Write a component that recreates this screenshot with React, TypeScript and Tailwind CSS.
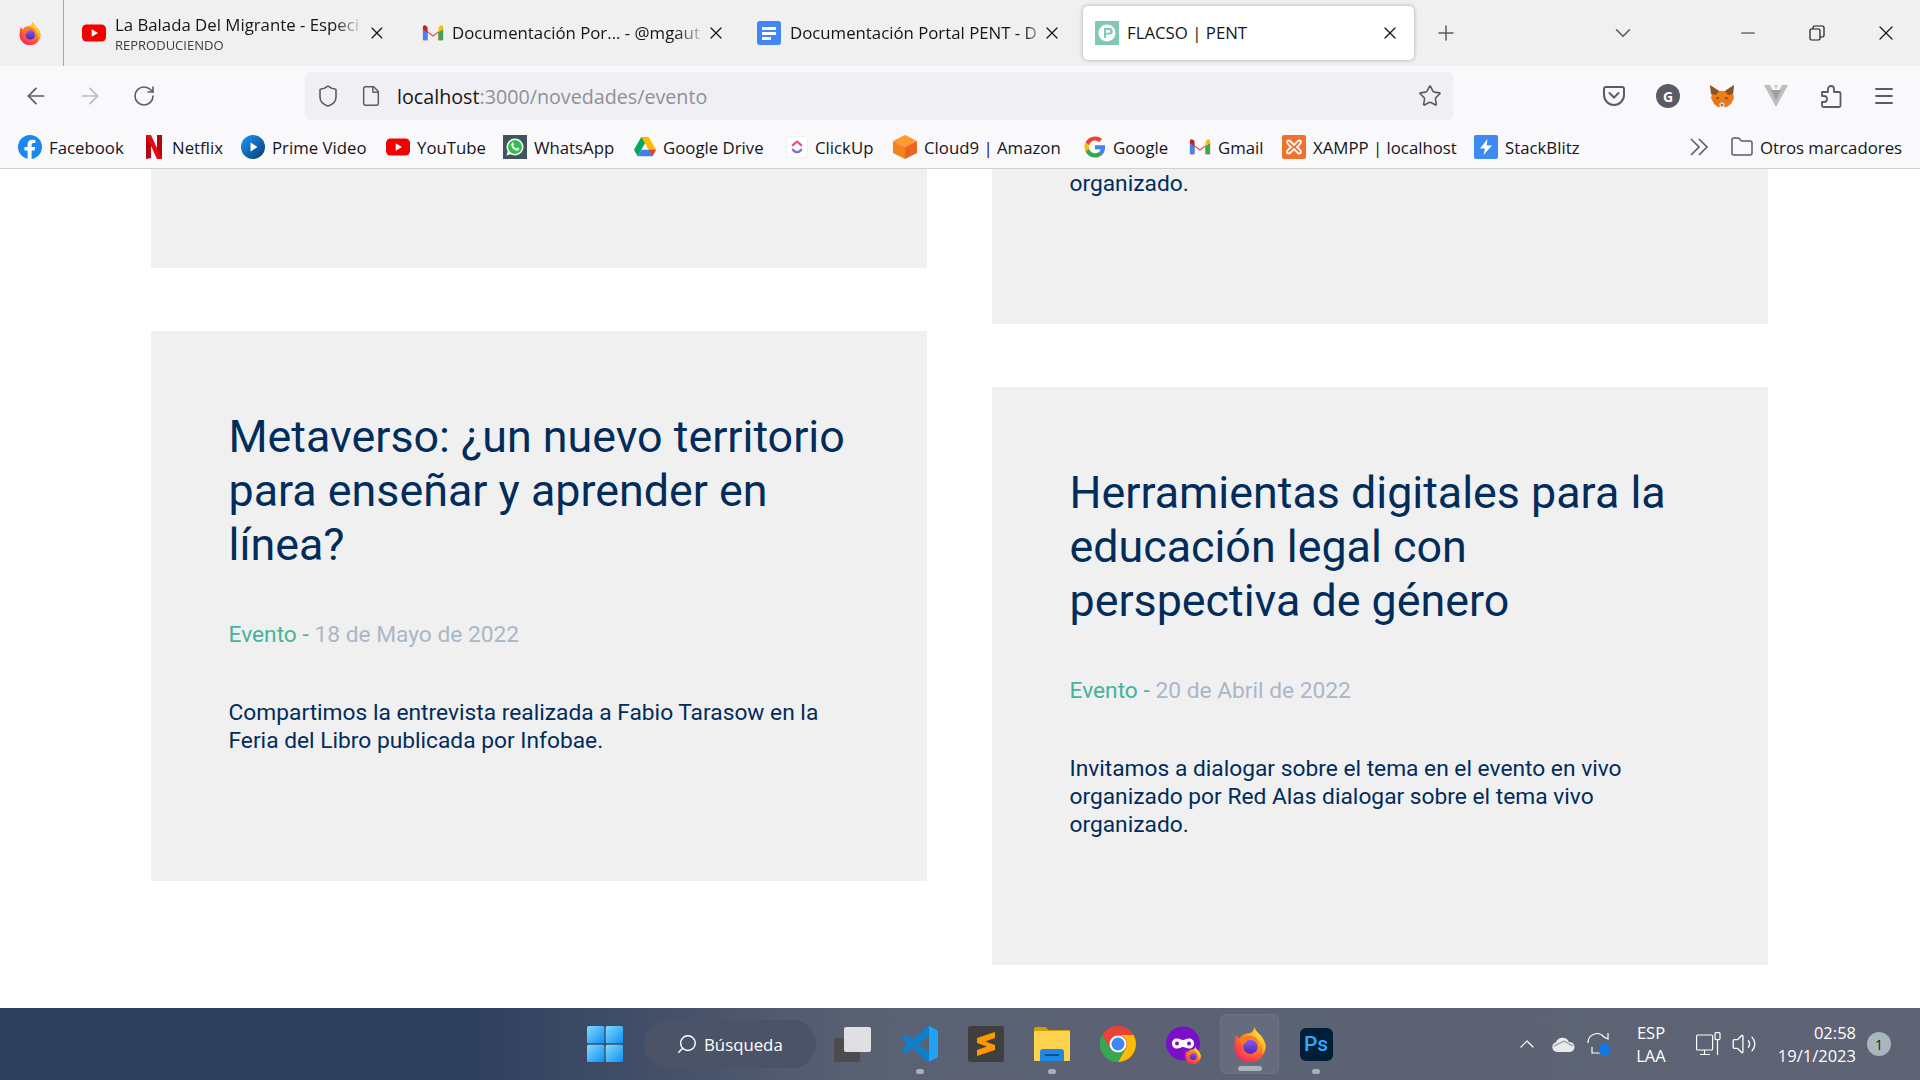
import React from "react"
import { ArrowLeft, ArrowRight, RotateCw, Shield, File, Star, Plus, ChevronDown, Minus, X, Menu, Folder, ChevronUp, Search, Volume2 } from "lucide-react"

const Firefox = ({ size = 24 }: { size?: number }) => (
	<svg width={size} height={size} viewBox="0 0 40 40">
		<defs>
			<radialGradient id="ffbase" cx="0.7" cy="0.2" r="1">
				<stop offset="0" stopColor="#ffd02e" />
				<stop offset="0.4" stopColor="#ff8a1f" />
				<stop offset="0.75" stopColor="#ff3b4e" />
				<stop offset="1" stopColor="#e31587" />
			</radialGradient>
			<linearGradient id="ffflame" x1="0.5" y1="0" x2="0.5" y2="1">
				<stop offset="0" stopColor="#ffe23a" />
				<stop offset="1" stopColor="#ffa51f" />
			</linearGradient>
			<linearGradient id="ffcore" x1="0.5" y1="0" x2="0.5" y2="1">
				<stop offset="0" stopColor="#8a5cf0" />
				<stop offset="1" stopColor="#4e25b0" />
			</linearGradient>
		</defs>
		<path d="M3 19C3 15 4 12 5 10c1 2 2 3 3 4 3-5 8-6 12-6 2-1 4-3 5-7 1 5 5 7 8 11 3 4 4.500 8 4.500 11a17.500 17.500 0 0 1-35 0c0-1 .2-3 .5-4z" fill="url(#ffbase)" />
		<path d="M25 1c1 5 5 7 8 11 3 4 4.500 8 4.500 11 -.5 4-2.500 7-4.500 9 2-6 0-14-6-18-1-4-1-8-2-13z" fill="url(#ffflame)" />
		<circle cx="20.500" cy="23" r="8" fill="url(#ffcore)" />
		<path d="M6 17c4-5 10-7 16-6 5 1 8 5 8 10-2-4-5-6-9-6-3 0-5 1-6 4l-3 1c-1-2-3-3-6-3z" fill="#ff7a1f" />
	</svg>
)

const YoutubeIcon = () => (
	<svg width="24" height="24" viewBox="0 0 24 24" className="shrink-0">
		<rect x="0" y="3.500" width="24" height="17" rx="4.500" fill="#f40000" />
		<path d="M9.700 8.200v7.600l6.300-3.800z" fill="#fff" />
	</svg>
)

const GmailIcon = () => (
	<svg width="22" height="24" viewBox="0 0 24 24" className="shrink-0">
		<path d="M1 6.500 12 14.500 23 6.500V20h-5V11.500l-6 4.500-6-4.500V20H1z" fill="#ea4335" />
		<path d="M1 8v10.500A1.500 1.500 0 0 0 2.500 20H6v-8.500z" fill="#4285f4" />
		<path d="M23 8v10.500a1.500 1.500 0 0 1-1.500 1.500H18v-8.500z" fill="#34a853" />
		<path d="M18 6.500v5L23 8V5.500c0-1.800-2-2.600-3.200-1.500z" fill="#fbbc04" />
		<path d="M1 8V5.500C1 3.700 3 2.900 4.200 4L6 5.500v6z" fill="#c5221f" />
	</svg>
)

const DocsIcon = () => (
	<svg width="24" height="24" viewBox="0 0 24 24" className="shrink-0">
		<rect width="24" height="24" rx="3" fill="#4285f4" />
		<path d="M5 6h14v3H5zM5 11h14v3H5zM5 16h9v3H5z" fill="#fff" />
	</svg>
)

const PentIcon = () => (
	<svg width="24" height="24" viewBox="0 0 24 24" className="shrink-0">
		<rect width="24" height="24" fill="#7ec8b6" />
		<circle cx="12" cy="12" r="8.500" fill="#fff" />
		<path d="M9 7h5.500a3 3 0 0 1 0 6.500H11V17H9zM11 9v2.700h3a1.300 1.300 0 0 0 0-2.700z" fill="#7ec8b6" />
	</svg>
)

const FacebookIcon = () => (
	<svg width="24" height="24" viewBox="0 0 24 24" className="shrink-0">
		<circle cx="12" cy="12" r="12" fill="#1b87f3" />
		<path d="M16.600 15.400 17.200 12h-3.600V9.800c0-1 .5-1.800 2-1.800h1.700V5c-.9-.2-2-.3-2.900-.3-3 0-4.800 1.700-4.800 4.800V12H6.500v3.400h3.100V24h4v-8.600z" fill="#fff" />
	</svg>
)

const NetflixIcon = () => (
	<svg width="19" height="24" viewBox="4 0 19 24" className="shrink-0">
		<path d="M4 0h5v23l-5 1z" fill="#b1060f" />
		<path d="M15 0h5v24l-5-1z" fill="#b1060f" />
		<path d="M4 0h5l11 24h-5z" fill="#e50914" />
	</svg>
)

const PrimeIcon = () => (
	<svg width="24" height="24" viewBox="0 0 24 24" className="shrink-0">
		<defs>
			<linearGradient id="prm" x1="0" y1="0" x2="1" y2="1">
				<stop offset="0" stopColor="#1a98ff" />
				<stop offset="1" stopColor="#0a3a6e" />
			</linearGradient>
		</defs>
		<circle cx="12" cy="12" r="12" fill="url(#prm)" />
		<path d="M9.500 7.500v9l7-4.500z" fill="#fff" />
	</svg>
)

const WhatsappIcon = () => (
	<svg width="24" height="24" viewBox="0 0 24 24" className="shrink-0">
		<rect width="24" height="24" fill="#43535c" />
		<circle cx="12" cy="12" r="8.500" fill="#fff" />
		<path d="M3.500 20.500 5 15l4 4z" fill="#fff" />
		<circle cx="12" cy="12" r="7" fill="#30c04f" />
		<path d="M9.300 7.800c-.9.800-1.300 2-.7 3.500.8 2 2.300 3.500 4.300 4.200 1.400.5 2.500 0 3.100-.9.300-.6.300-1 .2-1.200l-2-1-.9 1c-1.400-.5-2.500-1.600-3.100-3l.8-.9-.9-2.100c-.2-.1-.5-.1-.8.400z" fill="#fff" />
	</svg>
)

const DriveIcon = () => (
	<svg width="22" height="22" viewBox="0 0 24 22" className="shrink-0">
		<path d="M8 0h8l8 14h-8z" fill="#ffba00" />
		<path d="M8 0 0 14l4 7 8-14z" fill="#00a85d" />
		<path d="M4 21h16l4-7H8z" fill="#3f7fee" />
		<path d="M16 14h8l-4 7z" fill="#e8412f" />
	</svg>
)

const ClickupIcon = () => (
	<svg width="22" height="24" viewBox="0 0 24 24" className="shrink-0">
		<rect x="0.500" y="0.500" width="23" height="23" rx="3" fill="#fff" stroke="#eeeeee" />
		<path d="M7.500 10 12 6l4.500 4" stroke="#f04a8a" strokeWidth="2.500" fill="none" strokeLinecap="round" strokeLinejoin="round" />
		<path d="M7.500 15c2.500 3.400 6.500 3.400 9 0" stroke="#7b68ee" strokeWidth="2.500" fill="none" strokeLinecap="round" />
	</svg>
)

const CloudNineIcon = () => (
	<svg width="24" height="24" viewBox="0 0 24 24" className="shrink-0">
		<path d="M12 0 24 6 12 12 0 6z" fill="#ff9a2e" />
		<path d="M0 6 12 12V24L0 18z" fill="#f58220" />
		<path d="M24 6 12 12V24L24 18z" fill="#e8651f" />
	</svg>
)

const GoogleIcon = () => (
	<svg width="22" height="22" viewBox="0 0 24 24" className="shrink-0">
		<path d="M23 12.300c0-.8-.1-1.600-.2-2.300H12v4.400h6.200a5.300 5.300 0 0 1-2.300 3.500v2.900h3.700c2.100-2 3.400-4.900 3.400-8.500z" fill="#4285f4" />
		<path d="M12 23.500c3.100 0 5.700-1 7.600-2.800l-3.700-2.900c-1 .7-2.400 1.100-3.900 1.100-3 0-5.500-2-6.400-4.700H1.800v3A11.500 11.500 0 0 0 12 23.500z" fill="#34a853" />
		<path d="M5.600 14.200a6.900 6.900 0 0 1 0-4.400v-3H1.800a11.500 11.500 0 0 0 0 10.400z" fill="#fbbc05" />
		<path d="M12 5c1.700 0 3.200.6 4.400 1.700l3.300-3.300A11.500 11.500 0 0 0 1.800 6.800l3.800 3C6.500 7 9 5 12 5z" fill="#ea4335" />
	</svg>
)

const XamppIcon = () => (
	<svg width="24" height="24" viewBox="0 0 24 24" className="shrink-0">
		<rect width="24" height="24" rx="2" fill="#f0712c" />
		<path d="M5 7c0-2 3-2 4 0l3 3 3-3c1-2 4-2 4 0s-2 3-4 5c2 2 4 3 4 5s-3 2-4 0l-3-3-3 3c-1 2-4 2-4 0s2-3 4-5C7 10 5 9 5 7z" fill="none" stroke="#fff" strokeWidth="1.800" />
	</svg>
)

const StackblitzIcon = () => (
	<svg width="24" height="24" viewBox="0 0 24 24" className="shrink-0">
		<rect width="24" height="24" rx="2" fill="#3d8bf2" />
		<path d="M13.500 4 6 13.500h5L9.500 20 18 10.500h-5.300z" fill="#fff" />
	</svg>
)

const bookmarks = [
	{ label: "Facebook", width: 128, Icon: FacebookIcon },
	{ label: "Netflix", width: 95, Icon: NetflixIcon },
	{ label: "Prime Video", width: 145, Icon: PrimeIcon },
	{ label: "YouTube", width: 117, Icon: YoutubeIcon },
	{ label: "WhatsApp", width: 131, Icon: WhatsappIcon },
	{ label: "Google Drive", width: 152, Icon: DriveIcon },
	{ label: "ClickUp", width: 107, Icon: ClickupIcon },
	{ label: "Cloud9 | Amazon", width: 191, Icon: CloudNineIcon },
	{ label: "Google", width: 105, Icon: GoogleIcon },
	{ label: "Gmail", width: 93, Icon: GmailIcon },
	{ label: "XAMPP | localhost", width: 192, Icon: XamppIcon },
	{ label: "StackBlitz", width: 150, Icon: StackblitzIcon },
]

const TabStrip = () => (
	<div className="flex h-[66px] shrink-0 items-center bg-[#f0f0f0] text-[16.800px] text-[#15141a]">
		<div className="flex h-full w-[64px] items-center border-r border-[#a8a8a8] pl-[18px]">
			<Firefox size={24} />
		</div>
		<div className="ml-[18px] flex w-[305px] items-center">
			<YoutubeIcon />
			<div className="ml-[9px] w-[252px] whitespace-nowrap leading-[22px] [mask-image:linear-gradient(to_right,black_88%,transparent)]">
				<div className="mt-[1px]">La Balada Del Migrante - Especi</div>
				<div className="text-[13px] leading-[18px] text-[#3b3b40]">REPRODUCIENDO</div>
			</div>
			<X size={20} strokeWidth={1.5} className="ml-[3px]" />
		</div>
		<div className="ml-[35px] flex w-[305px] items-center">
			<GmailIcon />
			<div className="ml-[8px] w-[255px] whitespace-nowrap [mask-image:linear-gradient(to_right,black_88%,transparent)]">Documentación Por... - @mgaut</div>
			<X size={20} strokeWidth={1.5} className="ml-[-1px]" />
		</div>
		<div className="ml-[30px] flex w-[305px] items-center">
			<DocsIcon />
			<div className="ml-[9px] w-[255px] whitespace-nowrap [mask-image:linear-gradient(to_right,black_92%,transparent)]">Documentación Portal PENT - D</div>
			<X size={20} strokeWidth={1.5} className="ml-[-3px]" />
		</div>
		<div className="ml-[21px] flex h-[54px] w-[331px] shrink-0 items-center rounded-[5px] bg-white pl-[12px] pr-[14px] shadow-[0_0_4px_rgba(0,0,0,0.3)]">
			<PentIcon />
			<div className="ml-[8px] flex-1">FLACSO | PENT</div>
			<X size={20} strokeWidth={1.5} />
		</div>
		<Plus size={24} strokeWidth={1.5} className="ml-[20px] text-[#5b5b66]" />
		<ChevronDown size={26} strokeWidth={1.5} className="ml-[152px] text-[#5b5b66]" />
		<Minus size={22} strokeWidth={1} className="ml-[101px]" />
		<svg width="16" height="16" viewBox="0 0 16 16" fill="none" stroke="#15141a" strokeWidth="1.200" className="ml-[50px]">
			<rect x="1" y="4" width="10" height="11" rx="1.500" />
			<path d="M4 4V2.500A1.500 1.500 0 0 1 5.500 1h8A1.500 1.500 0 0 1 15 2.500v8a1.500 1.500 0 0 1-1.500 1.500H11" />
		</svg>
		<X size={24} strokeWidth={1.2} className="ml-[49px]" />
	</div>
)

const NavBar = () => (
	<div className="flex h-[60px] shrink-0 items-center bg-[#f9f9fb]">
		<ArrowLeft size={26} strokeWidth={1.6} className="ml-[23px] text-[#5b5b66]" />
		<ArrowRight size={26} strokeWidth={1.6} className="ml-[28px] text-[#b9b9bf]" />
		<RotateCw size={24} strokeWidth={1.6} className="ml-[29px] text-[#5b5b66]" />
		<div className="ml-[149px] flex h-[48px] w-[1148px] items-center rounded-[5px] bg-[#f0f0f4] pl-[11px] pr-[11px]">
			<Shield size={24} strokeWidth={1.6} className="text-[#5b5b66]" />
			<File size={22} strokeWidth={1.6} className="ml-[20px] text-[#5b5b66]" />
			<div className="ml-[15px] flex-1 pt-[2px] text-[19.700px] text-[#8f8f98]">
				<span className="text-[#15141a]">localhost</span>:3000/novedades/evento
			</div>
			<Star size={24} strokeWidth={1.6} className="text-[#5b5b66]" />
		</div>
		<svg width="22" height="20" viewBox="0 0 22 20" fill="none" stroke="#5b5b66" strokeWidth="2" className="ml-[150px]">
			<path d="M3 1h16a2 2 0 0 1 2 2v6a10 10 0 0 1-20 0V3a2 2 0 0 1 2-2z" />
			<path d="M6.500 7l4.500 4.500L15.500 7" strokeLinecap="round" />
		</svg>
		<div className="ml-[31px] flex h-[24px] w-[24px] items-center justify-center rounded-full bg-[#5b5b66] text-[14px] font-bold text-white">G</div>
		<svg width="24" height="24" viewBox="0 0 24 24" className="ml-[30px]">
			<path d="M0 1 9 7h6l9-6-1 8 1 5-3 6-4 3H8l-4-3-3-6 1-5z" fill="#ef7d1c" />
			<path d="M0 1 9 7 6 11 1 10zM24 1 15 7l3 4 5-1z" fill="#8a5526" />
			<path d="M3 16 7 13l5 5 5-5 4 3-5 7H8z" fill="#e8761f" />
			<path d="M9 20l3-2 3 2-1 3h-4z" fill="#e4d6c8" />
			<path d="M10.500 20.500h3l-1.500 1.500z" fill="#1f1f1f" />
			<path d="M6 14l3-1-1 2zM18 14l-3-1 1 2z" fill="#3a2a1f" />
		</svg>
		<svg width="24" height="22" viewBox="0 0 24 22" className="ml-[30px]">
			<path d="M0 0h24L12 22z" fill="#bdbdbf" />
			<path d="M6 0h12l-6 11z" fill="#f9f9fb" />
			<path d="M7 5h10l-5 10z" fill="#a0a0a2" />
			<path d="M9.500 0h5L12 5z" fill="#d2d2d4" />
		</svg>
		<svg width="24" height="24" viewBox="0 0 24 24" fill="none" stroke="#5b5b66" strokeWidth="1.800" className="ml-[31px]">
			<path d="M3 8h6V5a3 3 0 0 1 6 0v3h5a1.500 1.500 0 0 1 1.500 1.500v12A1.500 1.500 0 0 1 20 23H4.500A1.500 1.500 0 0 1 3 21.500V18h2a3 3 0 0 0 0-6H3z" strokeLinejoin="round" />
		</svg>
		<Menu size={24} strokeWidth={1.8} className="ml-[29px] text-[#5b5b66]" />
	</div>
)

const BookmarkBar = () => (
	<div className="flex h-[43px] shrink-0 items-center border-b border-[#d0d0d3] bg-[#f9f9fb] text-[16.800px] text-[#15141a]">
		<div className="w-[18px] shrink-0" />
		{bookmarks.map(({ label, width, Icon }) => (
			<div key={label} className="flex shrink-0 items-center gap-[7px] whitespace-nowrap" style={{ width }}>
				<Icon />
				<span className="pt-[1px]">{label}</span>
			</div>
		))}
		<svg width="20" height="18" viewBox="0 0 20 18" fill="none" stroke="#5b5b66" strokeWidth="1.600" className="ml-[65px]">
			<path d="M2 1l8 8-8 8M10 1l8 8-8 8" />
		</svg>
		<Folder size={24} strokeWidth={1.5} className="ml-[21px] text-[#5b5b66]" />
		<span className="ml-[6px] whitespace-nowrap pt-[1px]">Otros marcadores</span>
	</div>
)

const NewsCard = ({ title, date, body }: { title: string[]; date: string; body: string[] }) => (
	<div className="bg-[#f0f0f0] pb-[126px] pl-[77.500px] pr-[40px] pt-[79px] text-[#012c5b]">
		<h2 className="text-[44.800px] leading-[54px]">
			{title.map((line) => (
				<div key={line}>{line}</div>
			))}
		</h2>
		<p className="mt-[49px] text-[22.750px] leading-[28px] text-[#aab7c7]">
			<span className="text-[#45b39d]">Evento - </span>
			{date}
		</p>
		<div className="mt-[50px] text-[22.750px] leading-[28px]">
			{body.map((line) => (
				<div key={line}>{line}</div>
			))}
		</div>
	</div>
)

const Content = () => (
	<div className="flex min-h-0 flex-1 gap-[65px] overflow-hidden bg-white px-[151px] font-['Roboto',sans-serif]">
		<div className="flex w-[776px] flex-col gap-[63px]">
			<div className="h-[99px] bg-[#f0f0f0]" />
			<NewsCard
				title={["Metaverso: ¿un nuevo territorio", "para enseñar y aprender en", "línea?"]}
				date="18 de Mayo de 2022"
				body={["Compartimos la entrevista realizada a Fabio Tarasow en la", "Feria del Libro publicada por Infobae."]}
			/>
		</div>
		<div className="flex w-[776px] flex-col gap-[63px]">
			<div className="bg-[#f0f0f0] pb-[126px] pl-[77.500px] pt-[1px] text-[22.750px] leading-[28px] text-[#012c5b]">organizado.</div>
			<NewsCard
				title={["Herramientas digitales para la", "educación legal con", "perspectiva de género"]}
				date="20 de Abril de 2022"
				body={["Invitamos a dialogar sobre el tema en el evento en vivo", "organizado por Red Alas dialogar sobre el tema vivo", "organizado."]}
			/>
		</div>
	</div>
)

const Dot = ({ wide }: { wide?: boolean }) => (
	<div className={wide ? "absolute bottom-[2px] left-1/2 h-[5px] w-[24px] -translate-x-1/2 rounded-full bg-[#aab4bd]" : "absolute bottom-[6px] left-1/2 h-[5px] w-[8px] -translate-x-1/2 rounded-full bg-[#aab0b8]"} />
)

const AppSlot = ({ children, dot, active }: { children: React.ReactNode; dot?: boolean; active?: boolean }) => (
	<div className={active ? "relative flex h-[60px] w-[59px] shrink-0 items-center justify-center rounded-[6px] border border-[#6e7484] bg-[#666c7b]" : "relative flex h-[72px] w-[54px] shrink-0 items-center justify-center"}>
		{children}
		{dot && <Dot wide={active} />}
	</div>
)

const Taskbar = () => (
	<div className="flex h-[72px] shrink-0 items-center bg-[linear-gradient(90deg,#2f405e_0%,#30415f_25%,#5a6173_45%,#5e6474_100%)] font-['Open_Sans',sans-serif] text-white">
		<svg width="36" height="36" viewBox="0 0 36 36" className="ml-[587px]">
			<defs>
				<linearGradient id="win" x1="0" y1="0" x2="1" y2="1">
					<stop offset="0" stopColor="#7fdcff" />
					<stop offset="1" stopColor="#0f8ef0" />
				</linearGradient>
			</defs>
			<rect x="0" y="0" width="17.300" height="17.300" rx="1.500" fill="url(#win)" />
			<rect x="18.700" y="0" width="17.300" height="17.300" rx="1.500" fill="url(#win)" />
			<rect x="0" y="18.700" width="17.300" height="17.300" rx="1.500" fill="url(#win)" />
			<rect x="18.700" y="18.700" width="17.300" height="17.300" rx="1.500" fill="url(#win)" />
		</svg>
		<div className="ml-[21px] flex h-[48px] w-[172px] items-center rounded-full bg-[#4a5368] pl-[32px] text-[16.800px]">
			<Search size={22} strokeWidth={1.6} className="-scale-x-100" />
			<span className="ml-[6px] pt-[1px]">Búsqueda</span>
		</div>
		<svg width="38" height="36" viewBox="0 0 38 36" className="ml-[18px]">
			<rect x="0" y="12" width="26" height="24" rx="2" fill="#4c4c4e" />
			<rect x="10" y="1" width="27" height="25" rx="2" fill="#ebebeb" fillOpacity="0.92" />
		</svg>
		<div className="ml-[21px] flex items-center">
			<AppSlot dot>
				<svg width="36" height="36" viewBox="0 0 24 24">
					<path d="M23.150 2.587L18.210.21a1.494 1.494 0 0 0-1.705.29l-9.460 8.630-4.120-3.128a.999.999 0 0 0-1.276.057L.327 7.261A1 1 0 0 0 .326 8.740L3.899 12 .326 15.260a1 1 0 0 0 .001 1.479L1.650 17.940a.999.999 0 0 0 1.276.057l4.120-3.128 9.460 8.630a1.492 1.492 0 0 0 1.704.29l4.942-2.377A1.500 1.500 0 0 0 24 20.060V3.939a1.500 1.500 0 0 0-.850-1.352zm-5.146 14.861L10.826 12l7.178-5.448v10.896z" fill="#0f7fcb" />
					<path d="M18.004 0.070 23.150 2.587A1.500 1.500 0 0 1 24 3.939V20.060a1.500 1.500 0 0 1-.850 1.352L18.004 23.900z" fill="#21a3f3" />
				</svg>
			</AppSlot>
			<div className="w-[12px]" />
			<AppSlot>
				<svg width="36" height="36" viewBox="0 0 36 36">
					<rect width="36" height="36" rx="3" fill="#3f3f3f" />
					<path d="M9 12 27 6v6l-10 3.500L27 19v5L9 30v-6l10-3.500L9 17z" fill="#ff9800" />
				</svg>
			</AppSlot>
			<div className="w-[12px]" />
			<AppSlot dot>
				<svg width="36" height="34" viewBox="0 0 36 34">
					<path d="M0 2a2 2 0 0 1 2-2h9l4 3h21v8H0z" fill="#d99a0c" />
					<rect x="0" y="4" width="36" height="30" rx="1" fill="#ffd24d" />
					<path d="M9 22h18a3 3 0 0 1 3 3v9H6v-9a3 3 0 0 1 3-3z" fill="#1e88e5" />
					<rect x="11" y="27" width="14" height="2" fill="#0d4f8b" />
				</svg>
			</AppSlot>
			<div className="w-[12px]" />
			<AppSlot>
				<svg width="36" height="36" viewBox="0 0 36 36">
					<circle cx="18" cy="18" r="18" fill="#ea4335" />
					<path d="M18 9h15.500A18 18 0 0 1 18 36l7.800-13.500A9 9 0 0 0 18 9z" fill="#fbbc04" />
					<path d="M2.400 9A18 18 0 0 0 18 36l7.800-13.500H10.200z" fill="#34a853" />
					<circle cx="18" cy="18" r="8.500" fill="#fff" />
					<circle cx="18" cy="18" r="6.500" fill="#4285f4" />
				</svg>
			</AppSlot>
			<div className="w-[12px]" />
			<AppSlot>
				<svg width="36" height="36" viewBox="0 0 36 36">
					<circle cx="17" cy="17.500" r="17" fill="#7a0fc9" />
					<path d="M6 17.500c0-3 2-5 5-5 3 0 4 1.500 6 1.500s3-1.500 6-1.500c3 0 5 2 5 5s-2 5-5 5c-3 0-4-1.500-6-1.500s-3 1.500-6 1.500c-3 0-5-2-5-5z" fill="#fff" />
					<circle cx="11" cy="17.500" r="2" fill="#7a0fc9" />
					<circle cx="23" cy="17.500" r="2" fill="#7a0fc9" />
				</svg>
				<div className="absolute bottom-[16px] right-[9px]">
					<Firefox size={18} />
				</div>
			</AppSlot>
			<div className="w-[9px]" />
			<AppSlot dot active>
				<Firefox size={36} />
			</AppSlot>
			<div className="w-[10px]" />
			<AppSlot dot>
				<div className="flex h-[33px] w-[33px] items-center justify-center rounded-[6px] bg-[#001e36] font-['Roboto',sans-serif] text-[21px] font-medium leading-none text-[#31a8ff]">Ps</div>
			</AppSlot>
		</div>
		<ChevronUp size={24} strokeWidth={1.2} className="ml-[172px]" />
		<svg width="24" height="16" viewBox="0 0 24 16" className="ml-[12px]">
			<path d="M6 16a5 5 0 0 1-1-9.800A7 7 0 0 1 18 6a5 5 0 0 1 1 10z" fill="#e9eaec" />
			<path d="M3 10 13 5l9 5" fill="none" stroke="#a5a8b0" strokeWidth="1.500" />
		</svg>
		<svg width="26" height="26" viewBox="0 0 26 26" fill="none" stroke="#fff" strokeWidth="1.200" className="ml-[11px]">
			<path d="M2 12A9 9 0 0 1 18 6l4 2V2" />
			<path d="M16 22H6V16" />
			<circle cx="18.500" cy="18.500" r="6" fill="#0f78e6" stroke="none" />
		</svg>
		<div className="ml-[14px] flex w-[50px] flex-col items-center text-[16.500px] leading-[23px]">
			<span>ESP</span>
			<span>LAA</span>
		</div>
		<svg width="26" height="24" viewBox="0 0 26 24" fill="none" stroke="#fff" strokeWidth="1.200" className="ml-[20px]">
			<rect x="0.600" y="3" width="16" height="15" rx="1" />
			<path d="M8.500 18v4M4 22.500h10" />
			<rect x="19" y="0.600" width="5" height="7" rx="1" fill="#5e6474" />
			<path d="M21.500 8v15" />
		</svg>
		<Volume2 size={26} strokeWidth={1.2} className="ml-[9px]" />
		<div className="ml-[4px] flex w-[95px] flex-col items-end text-[16.500px] leading-[23px]">
			<span>02:58</span>
			<span>19/1/2023</span>
		</div>
		<div className="ml-[11px] flex h-[24px] w-[24px] items-center justify-center rounded-full bg-[#a9b6bd] text-[14px] text-[#222]">1</div>
	</div>
)

export default function App() {
	return (
		<div className="flex h-screen w-full flex-col overflow-hidden font-['Open_Sans',sans-serif]">
			<TabStrip />
			<NavBar />
			<BookmarkBar />
			<Content />
			<Taskbar />
		</div>
	)
}
